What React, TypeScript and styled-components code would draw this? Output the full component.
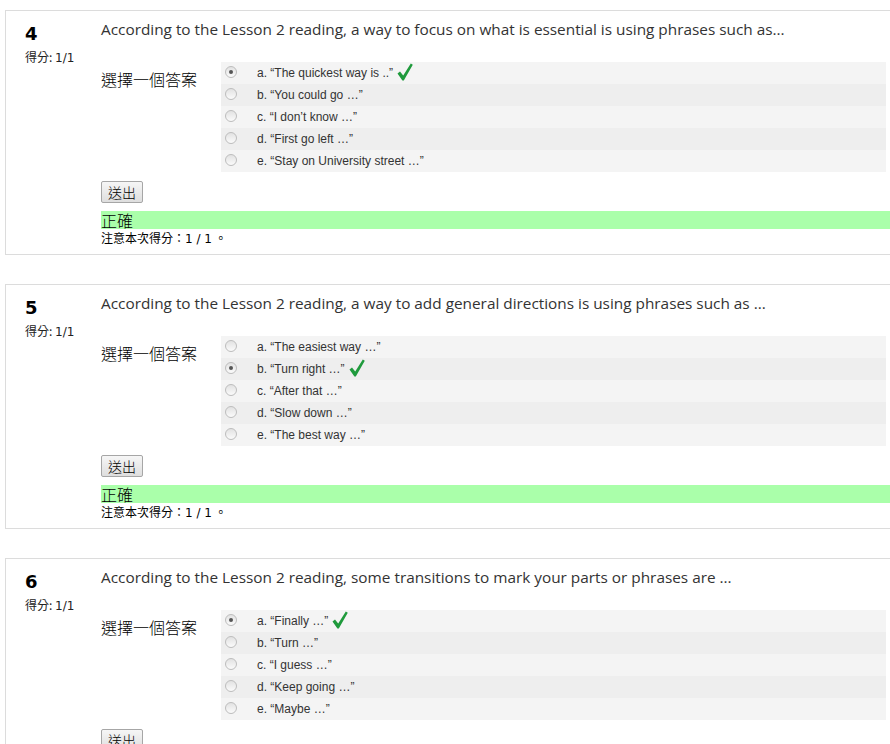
import React from "react";
import styled, { createGlobalStyle } from "styled-components";

const Global = createGlobalStyle`
  html, body { margin: 0; padding: 0; overflow: hidden; background: #fff; }
  body { font-family: "Open Sans", "Noto Sans CJK TC", sans-serif; color: #333; }
`;

const Page = styled.div`
  display: flex;
  flex-direction: column;
  gap: 29px;
  padding: 10px 0 0 5px;
  width: 1000px;
`;

const Card = styled.div`
  display: flex;
  border: 1px solid #dcdcdc;
  height: 243px;
  width: 990px;
  flex-shrink: 0;
`;

const Info = styled.div`
  width: 95px;
  padding: 11px 0 0 19px;
  box-sizing: border-box;
  flex-shrink: 0;
`;

const QNo = styled.div`
  font-family: "DejaVu Sans", sans-serif;
  font-weight: bold;
  font-size: 18px;
  line-height: 24px;
  color: #000;
`;

const Grade = styled.div`
  margin-top: 3px;
  font-family: "Noto Sans CJK TC", sans-serif;
  font-size: 12px;
  line-height: 16px;
  color: #222;
  span { font-family: "DejaVu Sans", sans-serif; font-size: 12px; }
`;

const Content = styled.div`
  flex: 1;
  display: flex;
  flex-direction: column;
  padding-top: 7px;
`;

const QText = styled.div`
  font-family: "Open Sans", sans-serif;
  font-size: 15.35px;
  line-height: 22px;
  color: #333;
`;

const ABlock = styled.div`
  display: flex;
  margin-top: 22px;
`;

const Prompt = styled.div`
  width: 120px;
  flex-shrink: 0;
  padding-top: 6px;
  font-family: "Noto Sans CJK TC", sans-serif;
  font-weight: 300;
  font-size: 16px;
  line-height: 22px;
  color: #000;
`;

const Answers = styled.div`
  width: 665px;
  display: flex;
  flex-direction: column;
`;

const Row = styled.div<{ $alt: boolean }>`
  display: flex;
  align-items: center;
  height: 22px;
  background: ${(p) => (p.$alt ? "#eeeeee" : "#f4f4f4")};
  font-family: "Liberation Sans", Arial, sans-serif;
  font-size: 12px;
  color: #333;
`;

const Radio = styled.span<{ $checked: boolean }>`
  position: relative;
  width: 12px;
  height: 12px;
  margin: -2px 20px 0 4px;
  border-radius: 50%;
  box-sizing: border-box;
  border: 1px solid #bdbdbd;
  background: linear-gradient(#e2e2e2, #fbfbfb);
  flex-shrink: 0;
  &::after {
    content: "";
    display: ${(p) => (p.$checked ? "block" : "none")};
    position: absolute;
    left: 3px;
    top: 3px;
    width: 4px;
    height: 4px;
    border-radius: 50%;
    background: #555;
  }
`;

const Label = styled.span``;

const Check = styled.svg`
  margin-left: 4px;
  margin-top: -2px;
`;

const Button = styled.button`
  align-self: flex-start;
  margin-top: 9px;
  width: 42px;
  height: 22px;
  padding: 0;
  border: 1px solid #a6a6a6;
  border-radius: 2px;
  background: linear-gradient(#f6f6f6, #dedede);
  font-family: "Noto Sans CJK TC", sans-serif;
  font-weight: 300;
  font-size: 14px;
  line-height: 18px;
  color: #000;
`;

const Correct = styled.div`
  margin-top: 8px;
  height: 18px;
  background: #aaffaa;
  font-family: "Noto Sans CJK TC", sans-serif;
  font-weight: 300;
  font-size: 16px;
  line-height: 19px;
  color: #000;
`;

const Score = styled.div`
  margin-top: 1px;
  font-family: "Noto Sans CJK TC", sans-serif;
  font-size: 12px;
  line-height: 16px;
  color: #000;
  span { font-family: "DejaVu Sans", sans-serif; font-size: 12px; }
`;

const CheckMark = () => (
  <Check width="16" height="18" viewBox="0 0 16 18">
    <path d="M0.5 10.5 L3 8.5 L6.2 12.6 L13.8 0.5 L15.8 1.8 L6.8 17.5 L5.4 17.5 Z" fill="#1f9a3c" />
  </Check>
);

type Q = { no: number; text: string; answers: string[]; checked: number };

const questions: Q[] = [
  {
    no: 4,
    text: "According to the Lesson 2 reading, a way to focus on what is essential is using phrases such as...",
    answers: [
      "a. \u201CThe quickest way is ..\u201D",
      "b. \u201CYou could go \u2026\u201D",
      "c. \u201CI don\u2019t know \u2026\u201D",
      "d. \u201CFirst go left \u2026\u201D",
      "e. \u201CStay on University street \u2026\u201D",
    ],
    checked: 0,
  },
  {
    no: 5,
    text: "According to the Lesson 2 reading, a way to add general directions is using phrases such as ...",
    answers: [
      "a. \u201CThe easiest way \u2026\u201D",
      "b. \u201CTurn right \u2026\u201D",
      "c. \u201CAfter that \u2026\u201D",
      "d. \u201CSlow down \u2026\u201D",
      "e. \u201CThe best way \u2026\u201D",
    ],
    checked: 1,
  },
  {
    no: 6,
    text: "According to the Lesson 2 reading, some transitions to mark your parts or phrases are ...",
    answers: [
      "a. \u201CFinally \u2026\u201D",
      "b. \u201CTurn \u2026\u201D",
      "c. \u201CI guess \u2026\u201D",
      "d. \u201CKeep going \u2026\u201D",
      "e. \u201CMaybe \u2026\u201D",
    ],
    checked: 0,
  },
];

export default function App() {
  return (
    <>
      <Global />
      <Page>
        {questions.map((q) => (
          <Card key={q.no}>
            <Info>
              <QNo>{q.no}</QNo>
              <Grade>
                得分: <span>1/1</span>
              </Grade>
            </Info>
            <Content>
              <QText>{q.text}</QText>
              <ABlock>
                <Prompt>選擇一個答案</Prompt>
                <Answers>
                  {q.answers.map((a, i) => (
                    <Row key={i} $alt={i % 2 === 1}>
                      <Radio $checked={i === q.checked} />
                      <Label>{a}</Label>
                      {i === q.checked && <CheckMark />}
                    </Row>
                  ))}
                </Answers>
              </ABlock>
              <Button>送出</Button>
              <Correct>正確</Correct>
              <Score>
                注意本次得分：<span>1 / 1</span> 。
              </Score>
            </Content>
          </Card>
        ))}
      </Page>
    </>
  );
}
